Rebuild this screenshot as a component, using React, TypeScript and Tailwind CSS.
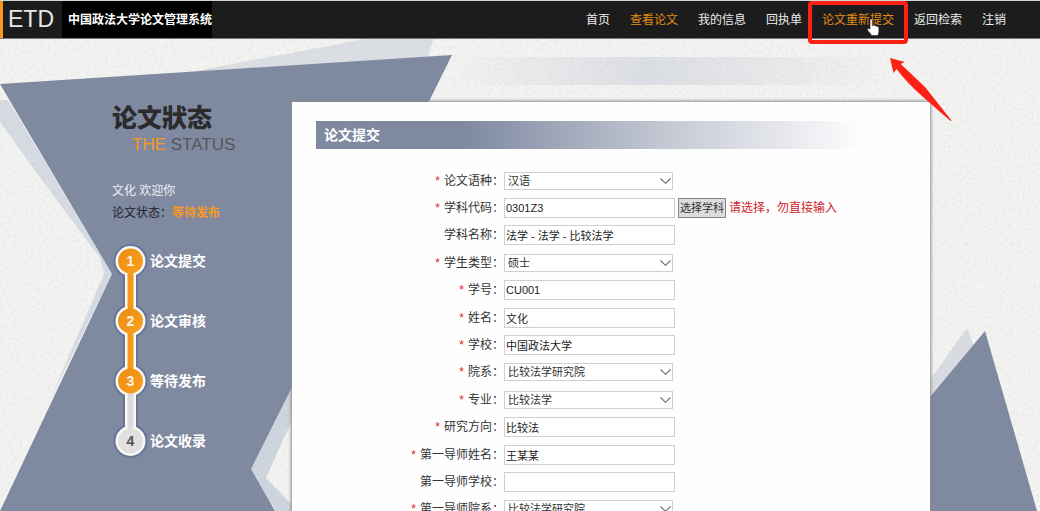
import { ChangeEvent, useState } from "react"

interface Field {
  id: string
  label: string
  value: string
  required?: boolean
  options?: string[]
  picker?: boolean
}

const NAV = [
  { label: "首页" },
  { label: "查看论文", active: true },
  { label: "我的信息" },
  { label: "回执单" },
  { label: "论文重新提交", active: true, marked: true },
  { label: "返回检索" },
  { label: "注销" },
]

const STEPS = [
  { label: "论文提交", done: true },
  { label: "论文审核", done: true },
  { label: "等待发布", done: true },
  { label: "论文收录", done: false },
]

const FIELDS: Field[] = [
  { id: "language", label: "论文语种", value: "汉语", required: true, options: ["汉语"] },
  { id: "subjectCode", label: "学科代码", value: "0301Z3", required: true, picker: true },
  { id: "subjectName", label: "学科名称", value: "法学 - 法学 - 比较法学" },
  { id: "studentType", label: "学生类型", value: "硕士", required: true, options: ["硕士"] },
  { id: "studentNo", label: "学号", value: "CU001", required: true },
  { id: "name", label: "姓名", value: "文化", required: true },
  { id: "school", label: "学校", value: "中国政法大学", required: true },
  { id: "college", label: "院系", value: "比较法学研究院", required: true, options: ["比较法学研究院"] },
  { id: "major", label: "专业", value: "比较法学", required: true, options: ["比较法学"] },
  { id: "direction", label: "研究方向", value: "比较法", required: true },
  { id: "tutorName", label: "第一导师姓名", value: "王某某", required: true },
  { id: "tutorSchool", label: "第一导师学校", value: "" },
  { id: "tutorCollege", label: "第一导师院系", value: "比较法学研究院", required: true, options: ["比较法学研究院"] },
]

function Backdrop() {
  return (
    <svg className="absolute left-0 top-0 w-full h-full" aria-hidden="true">
      <defs>
        <filter id="paper" x="0" y="0" width="100%" height="100%">
          <feTurbulence type="fractalNoise" baseFrequency="0.35" numOctaves="2" seed="4" />
          <feColorMatrix values="0 0 0 0 0.45  0 0 0 0 0.45  0 0 0 0 0.44  0.3 0 0 0 -0.1" />
        </filter>
        <linearGradient id="band">
          <stop offset="0" stopColor="#c9ced8" stopOpacity="0" />
          <stop offset="0.45" stopColor="#c9ced8" stopOpacity="0.55" />
          <stop offset="1" stopColor="#c9ced8" stopOpacity="0" />
        </linearGradient>
      </defs>
      <rect width="100%" height="100%" fill="#f4f4f3" />
      <polygon points="190,72 370,38 434,38 427,60" fill="#dce0e5" />
      <polygon points="0,100 0,122 36,172 100,258 104,274 50,400 112,274 8,100" fill="#d6dce3" />
      <rect x="450" y="57" width="440" height="28" fill="url(#band)" />
      <polygon points="250,470 292,385 292,420 266,478 292,505 292,511 276,511" fill="#cfd6df" />
      <polygon points="967,328 930,380 930,400 974,346" fill="#d9dde2" />
      <rect width="100%" height="100%" filter="url(#paper)" />
      <polygon points="0,84 452,55 400,160 292,387 251,469 275,511 0,511 112,274" fill="#7f8aa1" />
      <polygon points="985,331 1037,511 900,511 900,433" fill="#7f8aa1" />
    </svg>
  )
}

function Pointer() {
  return (
    <>
      <span className="absolute -left-3.5 -right-3.5 top-0 -bottom-1.5 border-4 border-[#fd2015] rounded" />
      <svg className="absolute left-10.5 top-4 w-5 h-5" viewBox="0 0 20 20" aria-hidden="true">
        <path
          d="M6.2 2.2c1-.5 2 .1 2.100 1.100v5.200l1-.3c.8-.2 1.500.1 1.800.7.900-.4 1.700-.1 2 .7 1-.2 1.800.4 1.800 1.400v3.200c0 1.800-.6 2.600-1.200 4.300H7.600c-1-2.200-2.300-3.300-3.800-5.100-1.200-1.500.300-2.600 1.600-1.700l.600.500V3.200c0-.4 0-.8.2-1z"
          fill="#fff"
          stroke="#222"
          strokeWidth="0.6"
        />
      </svg>
      <svg className="absolute left-16 top-14 w-[70px] h-[70px]" viewBox="0 0 70 70" aria-hidden="true">
        <path d="M4 1L18.700 5 14.700 7 39 30 65.500 63.500 64.500 64 36 39Q22 27 10.500 12L7.500 16Z" fill="#fd2015" />
      </svg>
    </>
  )
}

function Header() {
  return (
    <header className="relative z-10 flex h-[39px] border-t border-t-[#cfd6d8] border-b border-b-[#77777a] bg-[#1c1c1c]">
      <div className="flex items-center w-[62px] border-l-3 border-[#f8981d] pl-[5px] font-['Liberation_Sans'] text-[23px] text-[#e8e8e8]">
        ETD
      </div>
      <h1 className="flex items-center bg-black pl-1.5 text-xs font-bold text-white">中国政法大学论文管理系统</h1>
      <nav className="ml-auto flex gap-5 pr-[34px] text-xs">
        {NAV.map(item => (
          <a
            key={item.label}
            href="#"
            className={`relative flex items-center whitespace-nowrap ${item.active ? "text-[#e08c16]" : "text-[#ececec]"}`}
          >
            {item.label}
            {item.marked && <Pointer />}
          </a>
        ))}
      </nav>
    </header>
  )
}

function StepTrack() {
  const cy = (i: number) => 30 + i * 60
  return (
    <svg className="w-9 h-60 shrink-0" viewBox="0 0 36 240" aria-hidden="true">
      <defs>
        <linearGradient id="done" x1="0" y1="0" x2="1" y2="1">
          <stop offset="0" stopColor="#e98d10" />
          <stop offset="1" stopColor="#fba01f" />
        </linearGradient>
      </defs>
      {/* halo, white rim, then the coloured track */}
      <g fill="#667599">
        <rect x="11" y="30" width="15" height="180" />
        {STEPS.map((_, i) => <circle key={i} cx="18.500" cy={cy(i)} r="17" />)}
      </g>
      <g fill="#fbf9f4">
        <rect x="13" y="30" width="11" height="180" />
        {STEPS.map((_, i) => <circle key={i} cx="18.500" cy={cy(i)} r="15" />)}
      </g>
      <rect x="15.500" y="150" width="6" height="50" fill="#dcdcdc" />
      <rect x="15.500" y="30" width="6" height="120" fill="#f5981b" />
      {STEPS.map((s, i) => (
        <g key={s.label}>
          <circle cx="18.500" cy={cy(i)} r="12.500" fill={s.done ? "url(#done)" : "#e0e0e0"} />
          <text
            x="18.500"
            y={cy(i) + 5}
            textAnchor="middle"
            fontSize="14"
            fontWeight="700"
            fontFamily="Liberation Sans, sans-serif"
            fill={s.done ? "#fdf6e8" : "#555"}
          >
            {i + 1}
          </text>
        </g>
      ))}
    </svg>
  )
}

function Sidebar() {
  return (
    <aside className="w-[292px] shrink-0 pl-28">
      <h2 className="text-[25px] leading-8 font-black text-[#2b2b2b]">论文狀态</h2>
      <p className="pl-5 font-['Liberation_Sans'] text-[17px] leading-[22px] text-[#55565b]">
        <span className="text-[#f8981d]">THE</span> STATUS
      </p>
      <p className="mt-6 text-xs leading-[22px] text-[#eef0f4]">文化 欢迎你</p>
      <p className="text-xs leading-[22px] text-[#1d2027]">
        论文状态：<strong className="text-[#f8981d]">等待发布</strong>
      </p>
      <div className="mt-[7px] flex">
        <StepTrack />
        <ol className="ml-0.5">
          {STEPS.map(s => (
            <li key={s.label} className="flex items-center h-15 text-sm font-bold text-white">{s.label}</li>
          ))}
        </ol>
      </div>
    </aside>
  )
}

function FieldRow({ field }: { field: Field }) {
  const [value, setValue] = useState(field.value)
  const onChange = (e: ChangeEvent<HTMLInputElement | HTMLSelectElement>) => setValue(e.target.value)

  return (
    <div className="flex items-center">
      <label htmlFor={field.id} className="w-[212px] text-right text-xs text-[#333]">
        {field.required && <span className="mr-1 text-[#e02020]">*</span>}
        {field.label}：
      </label>
      {field.options ? (
        <div className="relative">
          <select
            id={field.id}
            value={value}
            onChange={onChange}
            className="block appearance-none w-[169px] h-[18px] border border-[#cfcfcf] bg-white px-[3px] text-[11px] leading-4 text-[#333]"
          >
            {field.options.map(o => <option key={o}>{o}</option>)}
          </select>
          <svg className="absolute right-0.5 top-1.5 w-[11px] h-1.5 pointer-events-none" viewBox="0 0 11 6" aria-hidden="true">
            <path d="M0.500 0.500L5.500 5.300 10.500 0.500" fill="none" stroke="#6b6b6b" strokeWidth="1.100" />
          </svg>
        </div>
      ) : (
        <input
          id={field.id}
          type="text"
          value={value}
          onChange={onChange}
          className="w-[171px] h-5 border border-[#cfcfcf] bg-white px-px text-[11px] text-[#222]"
        />
      )}
      {field.picker && (
        <>
          <button type="button" className="ml-[3px] h-5 border border-[#858585] bg-[#dcdcdc] px-px text-[11px] leading-4 text-[#333]">
            选择学科
          </button>
          <span className="ml-[3px] text-xs text-[#d2232a]">请选择，勿直接输入</span>
        </>
      )}
    </div>
  )
}

export default function App() {
  return (
    <div className="relative h-screen overflow-hidden font-['Liberation_Sans','Noto_Sans_CJK_SC',sans-serif]">
      <Backdrop />
      <Header />
      <div className="relative flex pt-[63px]">
        <Sidebar />
        <main className="flex-1 mr-[110px] bg-[#fefefe] pt-[19px] shadow-[0_0_3px_1px_#8a8a8a]">
          <h2 className="mx-6 pl-2 text-sm leading-7 font-bold text-white bg-linear-to-r from-[#7f8aa1] from-25% via-[#c6cad5] via-60% to-[#fefefe] to-93%">
            论文提交
          </h2>
          <form className="mt-[18px] grid auto-rows-fr h-[356px]">
            {FIELDS.map(f => <FieldRow key={f.id} field={f} />)}
          </form>
        </main>
      </div>
    </div>
  )
}
